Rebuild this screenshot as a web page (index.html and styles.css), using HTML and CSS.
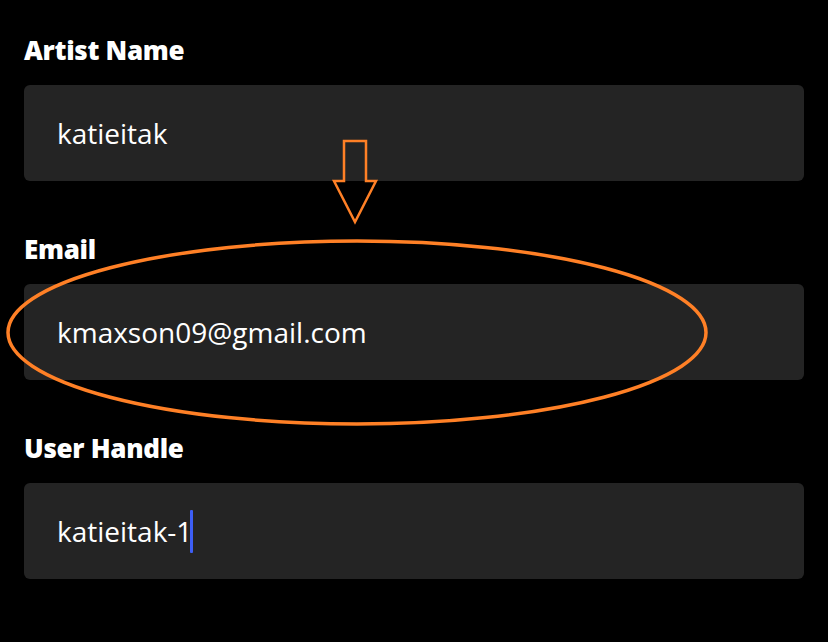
FILE: index.html
```html
<!DOCTYPE html>
<html lang="en">
<head>
  <meta charset="UTF-8">
  <title>Profile</title>
  <link rel="stylesheet" href="styles.css">
</head>
<body>

  <div class="form">
    <div class="field">
      <div class="label">Artist Name</div>
      <div class="box">katieitak</div>
    </div>

    <div class="field">
      <div class="label">Email</div>
      <div class="box">kmaxson09@gmail.com</div>
    </div>

    <div class="field">
      <div class="label">User Handle</div>
      <div class="box">katieitak-1<span class="caret"></span></div>
    </div>
  </div>

  <!-- annotation drawn over the form -->
  <svg class="markup" width="828" height="642" viewBox="0 0 828 642">
    <path d="M344 141 H366 V181 H376 L355 222 L334 181 H344 Z" fill="none" stroke="#ff8026" stroke-width="2.5"/>
    <ellipse cx="357" cy="332.5" rx="349" ry="91.5" fill="none" stroke="#ff8026" stroke-width="3.5"/>
  </svg>

</body>
</html>
```

FILE: styles.css
```css
body {
  background: #000;
  color: #fff;
  font-family: "Open Sans", "Noto Sans", sans-serif;
  margin: 0;
  width: 828px;
  height: 642px;
  overflow: hidden;
  position: relative;
}
.form {
  padding: 33px 24px 0 24px;
  display: flex;
  flex-direction: column;
  gap: 51px;
}
.label {
  font-size: 26px;
  font-weight: 800;
  line-height: 34px;
  letter-spacing: -0.3px;
  margin-bottom: 18px;
}
.box {
  background: #242424;
  border-radius: 6px;
  height: 96px;
  padding-left: 33px;
  display: flex;
  align-items: center;
  font-size: 28px;
}
.caret {
  display: inline-block;
  width: 3px;
  height: 43px;
  background: #3d5ef5;
  border-radius: 1px;
  margin-left: -2px;
}
.markup {
  position: absolute;
  left: 0;
  top: 0;
  pointer-events: none;
}
```
